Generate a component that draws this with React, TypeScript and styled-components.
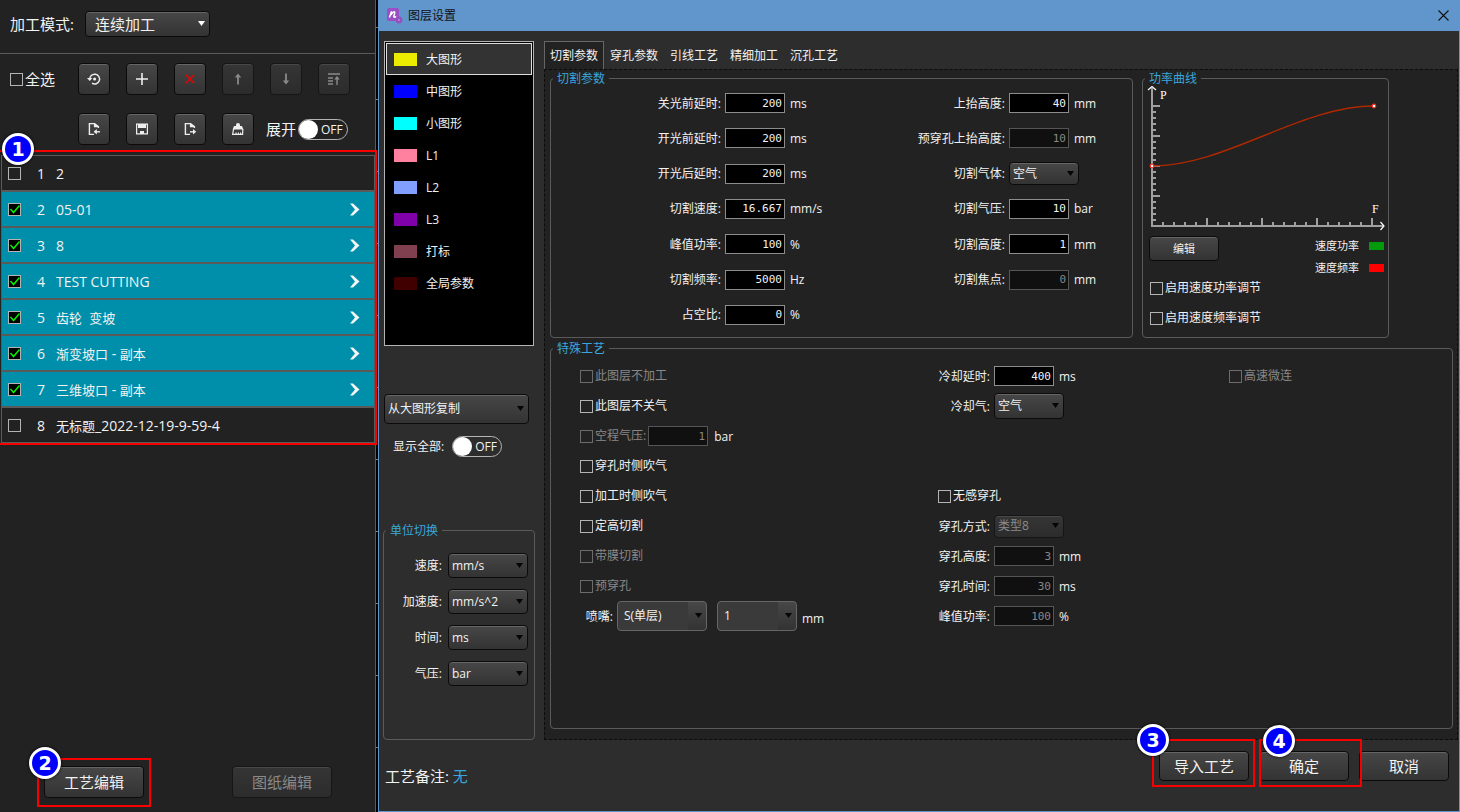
import React, { useId, useState } from "react";
import styled, { createGlobalStyle, css } from "styled-components";

const GlobalStyle = createGlobalStyle`
  *, *::before, *::after { box-sizing: border-box; }
  body {
    margin: 0;
    background: #222;
    color: #f2f2f2;
    font-family: "Open Sans", "Noto Sans CJK SC", sans-serif;
    font-size: 12px;
    line-height: 16px;
  }
  button, input, select { font: inherit; color: inherit; margin: 0; }
`;

/* ---------- shared controls ---------- */

const raised = css`
  border: 1px solid #0e0a0a;
  border-radius: 4px;
  background: linear-gradient(#474747, #333);
  box-shadow: inset 0 1px 0 #666;
`;

const raisedDisabled = css`
  border-color: #161616;
  background: linear-gradient(#353535, #2c2c2c);
  box-shadow: inset 0 1px 0 #484848;
  color: #8a8a8a;
`;

const PushButton = styled.button<{ $w: number; $h: number; $size?: number }>`
  ${raised}
  width: ${(p) => p.$w}px;
  height: ${(p) => p.$h}px;
  padding: 0;
  font-size: ${(p) => p.$size ?? 15}px;
  &:disabled { ${raisedDisabled} }
`;

const IconButton = styled.button`
  ${raised}
  display: flex;
  align-items: center;
  justify-content: center;
  width: 32px;
  height: 32px;
  padding: 0;
  color: #eee;
  &:disabled { ${raisedDisabled} }
`;

const SelectWrap = styled.span<{ $w: number }>`
  position: relative;
  display: inline-flex;
  flex: none;
  width: ${(p) => p.$w}px;
`;

const SelectBox = styled.select<{ $h: number; $size: number; $pad: number; $flat?: boolean }>`
  ${raised}
  appearance: none;
  width: 100%;
  height: ${(p) => p.$h}px;
  padding: 0 18px 0 ${(p) => p.$pad}px;
  font-size: ${(p) => p.$size}px;
  ${(p) =>
    p.$flat &&
    css`
      border-color: #666;
      background: linear-gradient(#474747, #333) right / 18px 100% no-repeat #3a3a3a;
      box-shadow: none;
    `}
  &:disabled { ${raisedDisabled} opacity: 1; }
`;

const Arrow = styled.svg`
  position: absolute;
  right: 5px;
  top: 50%;
  margin-top: -3px;
  pointer-events: none;
`;

type SelectProps = {
  id?: string;
  value: string;
  w: number;
  h?: number;
  size?: number;
  pad?: number;
  flat?: boolean;
  arrow?: string;
  disabled?: boolean;
  label?: string;
};

function Select({ id, value, w, h = 25, size = 12, pad = 3, flat, arrow = "#050505", disabled, label }: SelectProps) {
  return (
    <SelectWrap $w={w}>
      <SelectBox id={id} $h={h} $size={size} $pad={pad} $flat={flat} disabled={disabled} aria-label={label}>
        <option>{value}</option>
      </SelectBox>
      <Arrow width="7" height="6" viewBox="0 0 7 6" aria-hidden>
        <path d="M0 0h7L3.5 5z" fill={arrow} />
      </Arrow>
    </SelectWrap>
  );
}

const CheckLabel = styled.label<{ $size: number; $off?: boolean }>`
  display: flex;
  align-items: center;
  gap: 2px;
  font-size: ${(p) => p.$size}px;
  line-height: 20px;
  color: ${(p) => (p.$off ? "#888" : "inherit")};
`;

const CheckMark = styled.span`
  position: relative;
  display: flex;
  width: 13px;
  height: 13px;
  flex: none;
`;

const CheckInput = styled.input`
  appearance: none;
  width: 13px;
  height: 13px;
  border: 1px solid #b4b4b4;
  background: transparent;
  &:checked { background: #000; }
  &:disabled { border-color: #6c6c6c; }
`;

const Tick = styled.svg`
  position: absolute;
  inset: 0;
  pointer-events: none;
`;

type CheckProps = { label?: string; name?: string; initial?: boolean; disabled?: boolean; size?: number };

function Check({ label, name, initial = false, disabled, size = 12 }: CheckProps) {
  const [on, setOn] = useState(initial);
  return (
    <CheckLabel $size={size} $off={disabled}>
      <CheckMark>
        <CheckInput
          type="checkbox"
          checked={on}
          disabled={disabled}
          aria-label={name}
          onChange={(e) => setOn(e.target.checked)}
        />
        {on && (
          <Tick width="13" height="13" viewBox="0 0 13 13" aria-hidden>
            <path d="M2.5 6 L5.5 9.5 L11.5 2.5" fill="none" stroke="#00f000" strokeWidth="1.5" />
          </Tick>
        )}
      </CheckMark>
      {label}
    </CheckLabel>
  );
}

const ToggleLabel = styled.label<{ $size: number; $gap: number }>`
  display: flex;
  align-items: center;
  gap: ${(p) => p.$gap}px;
  font-size: ${(p) => p.$size}px;
`;

const ToggleTrack = styled.span`
  position: relative;
  display: flex;
  align-items: center;
  width: 50px;
  height: 21px;
  padding: 1px 0 0 22px;
  border: 1px solid #b4b4b4;
  border-radius: 11px;
  font-size: 12px;
`;

const ToggleInput = styled.input`
  position: absolute;
  left: 0;
  top: 0;
  appearance: none;
  width: 19px;
  height: 19px;
  border-radius: 50%;
  background: #fff;
`;

function Toggle({ label, size, gap }: { label: string; size: number; gap: number }) {
  return (
    <ToggleLabel $size={size} $gap={gap}>
      {label}
      <ToggleTrack>
        <ToggleInput type="checkbox" role="switch" />
        OFF
      </ToggleTrack>
    </ToggleLabel>
  );
}

/* ---------- numbered step marks ---------- */

type Inset = [number, number, number, number];

const Marked = styled.div`
  position: relative;
`;

const Frame = styled.span<{ $inset: Inset }>`
  position: absolute;
  z-index: 2;
  inset: ${(p) => p.$inset.map((n) => `${n}px`).join(" ")};
  border: 2px solid #f80000;
  pointer-events: none;
`;

const Badge = styled.span<{ $x: number; $y: number }>`
  position: absolute;
  z-index: 3;
  left: ${(p) => p.$x}px;
  top: ${(p) => p.$y}px;
  display: flex;
  align-items: center;
  justify-content: center;
  width: 32px;
  height: 32px;
  border: 3px solid #fff;
  border-radius: 50%;
  background: #0000fa;
  box-shadow: 0 0 3px #000;
  color: #fff;
  font-family: "DejaVu Sans", sans-serif;
  font-size: 19px;
  font-weight: 700;
  line-height: 26px;
  pointer-events: none;
`;

/* ---------- left panel ---------- */

const Page = styled.div`
  display: flex;
  min-height: 100vh;
`;

const Side = styled.aside`
  display: flex;
  flex-direction: column;
  flex: none;
  width: 376px;
  border-right: 1px solid #5a5a5a;
  background: #222;
`;

const ModeBar = styled.div`
  display: flex;
  align-items: center;
  height: 54px;
  padding: 0 10px 5px;
  border-bottom: 1px solid #5a5a5a;
  font-size: 15px;
`;

const ModeLabel = styled.label`
  width: 75px;
`;

const Tools = styled.div`
  display: flex;
  flex-direction: column;
  gap: 18px;
  padding: 9px 10px 10px;
`;

const ToolRow = styled.div`
  display: flex;
  align-items: center;
  gap: 16px;
  height: 32px;
`;

const ToolLead = styled.div`
  width: 52px;
`;

const ToggleSlot = styled.div`
  margin-left: -4px;
`;

const FileList = styled.ol`
  margin: 0 0 0 1px;
  padding: 0;
  border: 1px solid #5a5a5a;
  list-style: none;
`;

const FileRow = styled.li<{ $on: boolean }>`
  display: flex;
  align-items: center;
  height: 36px;
  padding: 0 14px 0 6px;
  border-bottom: 2px solid #5a5a5a;
  background: ${(p) => (p.$on ? "#008fab" : "#222")};
  font-size: 14px;
  line-height: 20px;
  &:last-child { height: 34px; border-bottom: 0; }
`;

const FileNo = styled.span`
  width: 19px;
  margin-left: 16px;
  padding-top: 2px;
`;

const FileName = styled.span`
  flex: 1;
  padding-top: 2px;
  white-space: pre;
`;

const Han = styled.span`
  font-size: 13px;
`;

const SideFoot = styled.div`
  display: flex;
  gap: 88px;
  margin-top: auto;
  padding: 0 0 14px 44px;
`;

const Ruler = styled.div`
  flex: none;
  width: 2px;
  background: repeating-linear-gradient(#000 0 27px, #777 27px 28px, #000 28px 72px);
`;

const files: [string, boolean][] = [
  ["2", false],
  ["05-01", true],
  ["8", true],
  ["TEST CUTTING", true],
  ["齿轮  变坡", true],
  ["渐变坡口 - 副本", true],
  ["三维坡口 - 副本", true],
  ["无标题_2022-12-19-9-59-4", false],
];

/* Chinese runs are set one pixel smaller than the Latin text beside them. */
function MixedText({ text }: { text: string }) {
  return (
    <>
      {text.split(/([\u4e00-\u9fff]+)/).map((part, i) => (i % 2 ? <Han key={i}>{part}</Han> : part))}
    </>
  );
}

const line = { fill: "none", stroke: "currentColor", strokeWidth: 1.4 } as const;

const Icon = ({ children }: { children: React.ReactNode }) => (
  <svg width="16" height="16" viewBox="0 0 16 16" aria-hidden>
    {children}
  </svg>
);

const docPath = "M8 13.4 H3.4 V2.6 H8.6 L12.4 5.6 V7 M8.6 2.6 V5.6 H12.4";

const IconHistory = () => (
  <Icon>
    <path d="M3.8 8.6 A4.9 4.9 0 1 1 6 12.2" {...line} />
    <path d="M1 7 H6.4 L3.7 10 Z" fill="currentColor" />
    <circle cx="8.6" cy="8" r="1.5" fill="currentColor" />
  </Icon>
);
const IconPlus = () => (
  <Icon>
    <path d="M2 8 H14 M8 2 V14" {...line} strokeWidth={1.6} />
  </Icon>
);
const IconCross = () => (
  <Icon>
    <path d="M3.8 3.8 L12.2 12.2 M12.2 3.8 L3.8 12.2" {...line} stroke="#f00000" />
  </Icon>
);
const IconUp = () => (
  <Icon>
    <path d="M8 13.5 V4" {...line} strokeWidth={1.8} />
    <path d="M4.8 6.5 L8 2.5 L11.2 6.5 Z" fill="currentColor" />
  </Icon>
);
const IconDown = () => (
  <Icon>
    <path d="M8 2.5 V12" {...line} strokeWidth={1.8} />
    <path d="M4.8 9.5 L8 13.5 L11.2 9.5 Z" fill="currentColor" />
  </Icon>
);
const IconTop = () => (
  <Icon>
    <path d="M2 3 H14 M2 7 H7 M2 10 H7 M2 13 H7 M11 14 V7" {...line} />
    <path d="M8.2 8.6 L11 5 L13.8 8.6 Z" fill="currentColor" />
  </Icon>
);
const IconImport = () => (
  <Icon>
    <path d={docPath} {...line} />
    <path d="M10 10.8 H14" {...line} />
    <path d="M10.8 8 V13.6 L7.6 10.8 Z" fill="currentColor" />
  </Icon>
);
const IconExport = () => (
  <Icon>
    <path d={docPath} {...line} />
    <path d="M8 10.8 H12" {...line} />
    <path d="M11 8 V13.6 L14.2 10.8 Z" fill="currentColor" />
  </Icon>
);
const IconSave = () => (
  <Icon>
    <path d="M2.6 3.1 H13.4 V12.9 H2.6 Z" {...line} strokeWidth={1.2} />
    <path d="M4 3 H12 V7 H4 Z M6 10 H10 V13 H6 Z" fill="currentColor" />
  </Icon>
);
const IconClean = () => (
  <Icon>
    <path d="M6 4 A2 2 0 0 1 10 4 V5 H12 L13.4 8.4 H2.6 L4 5 H6 Z" fill="currentColor" />
    <path d="M3.6 8 L2.6 13.4 H12.6 L12.8 8 M6 13.4 V11.4 M8.4 13.4 V11.4 M10.6 13.4 V11.4" {...line} strokeWidth={1.2} />
  </Icon>
);

function SidePanel() {
  return (
    <Side>
      <ModeBar>
        <ModeLabel htmlFor="mode">加工模式:</ModeLabel>
        <Select id="mode" value="连续加工" w={125} h={26} size={15} pad={9} arrow="#fff" />
      </ModeBar>
      <Tools>
        <ToolRow>
          <ToolLead>
            <Check label="全选" size={15} />
          </ToolLead>
          <IconButton aria-label="重置"><IconHistory /></IconButton>
          <IconButton aria-label="添加"><IconPlus /></IconButton>
          <IconButton aria-label="删除"><IconCross /></IconButton>
          <IconButton aria-label="上移" disabled><IconUp /></IconButton>
          <IconButton aria-label="下移" disabled><IconDown /></IconButton>
          <IconButton aria-label="置顶" disabled><IconTop /></IconButton>
        </ToolRow>
        <ToolRow>
          <ToolLead />
          <IconButton aria-label="导入"><IconImport /></IconButton>
          <IconButton aria-label="保存"><IconSave /></IconButton>
          <IconButton aria-label="导出"><IconExport /></IconButton>
          <IconButton aria-label="清空"><IconClean /></IconButton>
          <ToggleSlot>
            <Toggle label="展开" size={15} gap={2} />
          </ToggleSlot>
        </ToolRow>
      </Tools>
      <Marked>
        <FileList>
          {files.map(([name, on], i) => (
            <FileRow key={name} $on={on}>
              <Check initial={on} name={name} />
              <FileNo>{i + 1}</FileNo>
              <FileName>
                <MixedText text={name} />
              </FileName>
              {on && (
                <svg width="11" height="13" viewBox="0 0 11 13" aria-hidden>
                  <path d="M1 0.5 H4 L10.5 6.5 L4 12.5 H1 L6 6.5 Z" fill="#f4f4f4" />
                </svg>
              )}
            </FileRow>
          ))}
        </FileList>
        <Frame $inset={[-5, -2, -2, -2]} />
        <Badge $x={2} $y={-22}>1</Badge>
      </Marked>
      <SideFoot>
        <Marked>
          <PushButton $w={100} $h={32}>工艺编辑</PushButton>
          <Frame $inset={[-8, -7, -9, -7]} />
          <Badge $x={-15} $y={-19}>2</Badge>
        </Marked>
        <PushButton $w={100} $h={32} disabled>图纸编辑</PushButton>
      </SideFoot>
    </Side>
  );
}

/* ---------- dialog ---------- */

const Dialog = styled.main`
  display: flex;
  flex-direction: column;
  flex: 1;
  min-width: 0;
  border: 1px solid #6196cc;
  border-top: 0;
  background: #2d2d2d;
`;

const TitleBar = styled.header`
  display: flex;
  align-items: center;
  gap: 5px;
  height: 31px;
  padding: 0 10px 0 8px;
  background: #6196cc;
  color: #111;
`;

const Title = styled.h1`
  flex: 1;
  margin: 0;
  font-size: 12px;
  font-weight: 400;
`;

const CloseButton = styled.button`
  display: flex;
  padding: 0;
  border: 0;
  background: none;
`;

const Body = styled.div`
  display: flex;
  flex: 1;
  gap: 9px;
  padding: 10px 1px 0 4px;
`;

const LayerColumn = styled.div`
  display: flex;
  flex-direction: column;
  flex: none;
  width: 152px;
`;

const LayerList = styled.ul`
  height: 305px;
  margin: 0 1px;
  padding: 1px;
  border: 1px solid #b4b4b4;
  background: #000;
  list-style: none;
`;

const LayerButton = styled.button<{ $on: boolean }>`
  display: flex;
  align-items: center;
  gap: 9px;
  width: 100%;
  height: 32px;
  padding: 0 7px;
  border: 1px solid ${(p) => (p.$on ? "#ddd" : "transparent")};
  background: ${(p) => (p.$on ? "#333" : "none")};
`;

const LayerName = styled.span`
  padding-top: 2px;
`;

const Swatch = styled.span<{ $color: string; $w: number; $h: number }>`
  width: ${(p) => p.$w}px;
  height: ${(p) => p.$h}px;
  background: ${(p) => p.$color};
`;

const CopySlot = styled.div`
  display: flex;
  margin: 48px 1px 12px;
`;

const ShowAll = styled.div`
  margin: 0 0 65px 10px;
`;

const Group = styled.fieldset<{ $grow?: boolean; $w?: number }>`
  flex: ${(p) => (p.$grow ? "1 1 auto" : "none")};
  width: ${(p) => (p.$w ? `${p.$w}px` : "auto")};
  min-width: 0;
  margin: 0;
  padding: 0;
  border: 1px solid #5a5a5a;
  border-radius: 4px;
`;

const Legend = styled.legend`
  margin-left: 2px;
  padding: 2px 4px 0;
  line-height: 14px;
  color: #3aa6dd;
`;

const UnitRows = styled.div`
  display: flex;
  flex-direction: column;
  gap: 11px;
  padding-top: 15px;
`;

const Row = styled.div<{ $h?: number; $gap?: number }>`
  display: flex;
  align-items: center;
  flex: none;
  gap: ${(p) => p.$gap ?? 4}px;
  height: ${(p) => p.$h ?? 20}px;
`;

const RowLabel = styled.label<{ $w: number }>`
  flex: none;
  width: ${(p) => p.$w}px;
  padding-top: 1px;
  text-align: right;
  white-space: nowrap;
`;

const NumberBox = styled.input`
  flex: none;
  width: 60px;
  height: 20px;
  padding: 0 2px;
  border: 1px solid #8c8c8c;
  border-radius: 0;
  background: #000;
  font-family: "DejaVu Sans Mono", monospace;
  font-size: 11px;
  text-align: right;
  &:disabled { border-color: #555; background: #101010; color: #888; }
`;

const Unit = styled.span`
  margin-left: 1px;
  padding-top: 1px;
`;

type FieldProps = { label: string; value: string; unit?: string; off?: boolean; lw: number; h?: number; select?: number };

function Field({ label, value, unit, off, lw, h, select }: FieldProps) {
  const id = useId();
  return (
    <Row $h={h}>
      <RowLabel $w={lw} htmlFor={id}>{label}:</RowLabel>
      {select ? (
        <Select id={id} value={value} w={70} h={select} disabled={off} />
      ) : (
        <NumberBox id={id} defaultValue={value} disabled={off} />
      )}
      {unit && <Unit>{unit}</Unit>}
    </Row>
  );
}

const layers: [string, string][] = [
  ["大图形", "#ecec00"],
  ["中图形", "#0000ff"],
  ["小图形", "#00ffff"],
  ["L1", "#ff809f"],
  ["L2", "#809fff"],
  ["L3", "#8000aa"],
  ["打标", "#804050"],
  ["全局参数", "#400000"],
];

const units: [string, string][] = [
  ["速度", "mm/s"],
  ["加速度", "mm/s^2"],
  ["时间", "ms"],
  ["气压", "bar"],
];

function Layers() {
  const [active, setActive] = useState(0);
  return (
    <LayerColumn>
      <LayerList>
        {layers.map(([name, color], i) => (
          <li key={name}>
            <LayerButton $on={i === active} onClick={() => setActive(i)}>
              <Swatch $color={color} $w={23} $h={13} />
              <LayerName>{name}</LayerName>
            </LayerButton>
          </li>
        ))}
      </LayerList>
      <CopySlot>
        <Select value="从大图形复制" w={145} h={30} label="复制来源" />
      </CopySlot>
      <ShowAll>
        <Toggle label="显示全部:" size={12} gap={8} />
      </ShowAll>
      <Group $grow>
        <Legend>单位切换</Legend>
        <UnitRows>
          {units.map(([name, value]) => (
            <Row key={name} $h={25} $gap={6}>
              <RowLabel $w={58} htmlFor={`unit-${name}`}>{name}:</RowLabel>
              <Select id={`unit-${name}`} value={value} w={80} />
            </Row>
          ))}
        </UnitRows>
      </Group>
    </LayerColumn>
  );
}

const Main = styled.div`
  display: flex;
  flex-direction: column;
  flex: 1;
  min-width: 0;
`;

const Tabs = styled.div`
  display: flex;
`;

const Tab = styled.button<{ $on: boolean }>`
  width: 60px;
  height: 28px;
  padding: 0;
  border: 1px solid ${(p) => (p.$on ? "#666" : "transparent")};
  border-bottom: 0;
  background: ${(p) => (p.$on ? "#222" : "none")};
  white-space: nowrap;
`;

const TabPanel = styled.div`
  display: flex;
  flex-direction: column;
  flex: 1;
  gap: 2px;
  padding: 0 4px 10px 5px;
  border: 1px dashed #0c0c0c;
  background: #222;
`;

const TopGroups = styled.div`
  display: flex;
  gap: 9px;
  padding-right: 64px;
`;

const ParamColumns = styled.div`
  display: flex;
  padding: 7px 0 12px;
`;

const ParamColumn = styled.div`
  display: flex;
  flex-direction: column;
  justify-content: space-between;
  width: 284px;
  height: 232px;
`;

const CurveBody = styled.div`
  padding: 0 4px 0 6px;
`;

const ChartSvg = styled.svg`
  display: block;
  margin-left: -4px;
`;

const CurveTools = styled.div`
  display: flex;
  justify-content: space-between;
  align-items: flex-start;
  padding-top: 4px;
`;

const Keys = styled.div`
  display: flex;
  flex-direction: column;
  gap: 6px;
  padding-top: 2px;
  font-size: 11px;
`;

const Key = styled.div`
  display: flex;
  align-items: center;
  gap: 10px;
`;

const CurveChecks = styled.div`
  display: flex;
  flex-direction: column;
  gap: 10px;
  padding: 2px 0 0 1px;
`;

const Special = styled.div`
  display: grid;
  grid-template-columns: 358fr 291fr 223fr;
  padding: 5px 0 0 29px;
`;

const NozzleRow = styled(Row)`
  padding-left: 5px;
`;

const NozzleUnit = styled.span`
  padding: 6px 0 0 1px;
`;

const Gap = styled.div<{ $w?: number; $h?: number }>`
  width: ${(p) => p.$w ?? 1}px;
  height: ${(p) => p.$h ?? 1}px;
`;

const Foot = styled.footer`
  display: flex;
  align-items: flex-start;
  gap: 10px;
  padding: 11px 10px 25px 6px;
`;

const Note = styled.p`
  flex: 1;
  margin: 0;
  padding-top: 15px;
  font-size: 15px;
  line-height: 20px;
`;

const NoteValue = styled.span`
  color: #3aa6dd;
`;

const leftParams: [string, string, string][] = [
  ["关光前延时", "200", "ms"],
  ["开光前延时", "200", "ms"],
  ["开光后延时", "200", "ms"],
  ["切割速度", "16.667", "mm/s"],
  ["峰值功率", "100", "%"],
  ["切割频率", "5000", "Hz"],
  ["占空比", "0", "%"],
];

const ticks = Array.from({ length: 20 }, (_, i) => i + 1);

function PowerChart() {
  return (
    <ChartSvg width="240" height="146" viewBox="0 0 240 146" role="img" aria-label="功率曲线">
      <g stroke="#a0a0a0" fill="none" strokeWidth="2">
        <path d="M7 2 V141 M6 140 H238" />
        {ticks.map((n) => (
          <path key={n} d={`M7 ${140 - n * 6} h${n % 5 === 0 ? 8 : 4} M${7 + n * 11} 140 v${n % 5 === 0 ? -8 : -4}`} />
        ))}
      </g>
      <path d="M3 4 L7 0.5 L11 4 M235.5 136 L239 140 L235.5 144" fill="none" stroke="#fff" strokeWidth="1.2" />
      <path d="M7 80 C81 80 155 20 229 20" fill="none" stroke="#b02800" strokeWidth="1.4" />
      <g fill="#fff" stroke="#f03020" strokeWidth="1.2">
        <circle cx="7" cy="80" r="1.8" />
        <circle cx="229" cy="20" r="1.8" />
      </g>
      <g fill="#fff" fontFamily="Liberation Serif, serif" fontSize="12">
        <text x="15" y="13">P</text>
        <text x="227" y="127">F</text>
      </g>
    </ChartSvg>
  );
}

function CuttingPanel() {
  return (
    <TabPanel role="tabpanel">
      <TopGroups>
        <Group $grow>
          <Legend>切割参数</Legend>
          <ParamColumns>
            <ParamColumn>
              {leftParams.map(([label, value, unit]) => (
                <Field key={label} label={label} value={value} unit={unit} lw={170} />
              ))}
            </ParamColumn>
            <ParamColumn>
              <Field label="上抬高度" value="40" unit="mm" lw={170} />
              <Field label="预穿孔上抬高度" value="10" unit="mm" off lw={170} />
              <Field label="切割气体" value="空气" select={23} lw={170} />
              <Field label="切割气压" value="10" unit="bar" lw={170} />
              <Field label="切割高度" value="1" unit="mm" lw={170} />
              <Field label="切割焦点" value="0" unit="mm" off lw={170} />
              <Row />
            </ParamColumn>
          </ParamColumns>
        </Group>
        <Group $w={247}>
          <Legend>功率曲线</Legend>
          <CurveBody>
            <PowerChart />
            <CurveTools>
              <PushButton $w={70} $h={25} $size={11}>编辑</PushButton>
              <Keys>
                <Key>速度功率<Swatch $color="#009a0c" $w={15} $h={8} /></Key>
                <Key>速度频率<Swatch $color="#ff0000" $w={15} $h={8} /></Key>
              </Keys>
            </CurveTools>
            <CurveChecks>
              <Check label="启用速度功率调节" />
              <Check label="启用速度频率调节" />
            </CurveChecks>
          </CurveBody>
        </Group>
      </TopGroups>
      <Group $grow>
        <Legend>特殊工艺</Legend>
        <Special>
          <div>
            <Row $h={30}><Check label="此图层不加工" disabled /></Row>
            <Row $h={30}><Check label="此图层不关气" /></Row>
            <Row $h={30} $gap={2}>
              <Check label="空程气压:" disabled />
              <NumberBox defaultValue="1" disabled aria-label="空程气压" />
              <Gap />
              <Unit>bar</Unit>
            </Row>
            <Row $h={30}><Check label="穿孔时侧吹气" /></Row>
            <Row $h={30}><Check label="加工时侧吹气" /></Row>
            <Row $h={30}><Check label="定高切割" /></Row>
            <Row $h={30}><Check label="带膜切割" disabled /></Row>
            <Row $h={30}><Check label="预穿孔" disabled /></Row>
            <NozzleRow $h={30}>
              <RowLabel $w={28} htmlFor="nozzle">喷嘴:</RowLabel>
              <Select id="nozzle" value="S(单层)" w={90} h={30} pad={6} flat />
              <Gap $w={2} />
              <Select value="1" w={80} h={30} pad={6} flat label="喷嘴直径" />
              <NozzleUnit>mm</NozzleUnit>
            </NozzleRow>
          </div>
          <div>
            <Field label="冷却延时" value="400" unit="ms" lw={52} h={30} />
            <Field label="冷却气" value="空气" select={26} lw={52} h={30} />
            <Gap $h={60} />
            <Row $h={30}><Check label="无感穿孔" /></Row>
            <Field label="穿孔方式" value="类型8" select={23} off lw={52} h={30} />
            <Field label="穿孔高度" value="3" unit="mm" off lw={52} h={30} />
            <Field label="穿孔时间" value="30" unit="ms" off lw={52} h={30} />
            <Field label="峰值功率" value="100" unit="%" off lw={52} h={30} />
          </div>
          <div>
            <Row $h={30}><Check label="高速微连" disabled /></Row>
          </div>
        </Special>
      </Group>
    </TabPanel>
  );
}

const tabs = ["切割参数", "穿孔参数", "引线工艺", "精细加工", "沉孔工艺"];

export default function App() {
  const [tab, setTab] = useState(0);
  return (
    <Page>
      <GlobalStyle />
      <SidePanel />
      <Ruler />
      <Dialog>
        <TitleBar>
          <svg width="16" height="16" viewBox="0 0 16 16" aria-hidden>
            <rect x="0" y="0" width="12" height="13" rx="2" fill="#9b4fc4" />
            <circle cx="12" cy="12" r="3.4" fill="#9450bd" />
            <circle cx="12" cy="12" r="1" fill="#b98ae0" />
            <path d="M2.4 9.6 L4.6 3.2 M4 7 C5.4 3.6 8.4 2.6 7.6 5.4 L6.8 8.2 C6.6 9.6 7.8 9.6 9 8.4" fill="none" stroke="#fff" strokeWidth="1.5" />
          </svg>
          <Title>图层设置</Title>
          <CloseButton aria-label="关闭">
            <svg width="11" height="11" viewBox="0 0 11 11" aria-hidden>
              <path d="M0.5 0.5 L10.5 10.5 M10.5 0.5 L0.5 10.5" stroke="#111" strokeWidth="1.1" />
            </svg>
          </CloseButton>
        </TitleBar>
        <Body>
          <Layers />
          <Main>
            <Tabs role="tablist">
              {tabs.map((name, i) => (
                <Tab key={name} role="tab" aria-selected={i === tab} $on={i === tab} onClick={() => setTab(i)}>
                  {name}
                </Tab>
              ))}
            </Tabs>
            <CuttingPanel />
          </Main>
        </Body>
        <Foot>
          <Note>
            工艺备注: <NoteValue>无</NoteValue>
          </Note>
          <Marked>
            <PushButton $w={90} $h={30}>导入工艺</PushButton>
            <Frame $inset={[-12, -6, -6, -7]} />
            <Badge $x={-22} $y={-27}>3</Badge>
          </Marked>
          <Marked>
            <PushButton $w={90} $h={30}>确定</PushButton>
            <Frame $inset={[-12, -13, -6, 0]} />
            <Badge $x={4} $y={-26}>4</Badge>
          </Marked>
          <PushButton $w={90} $h={30}>取消</PushButton>
        </Foot>
      </Dialog>
    </Page>
  );
}
